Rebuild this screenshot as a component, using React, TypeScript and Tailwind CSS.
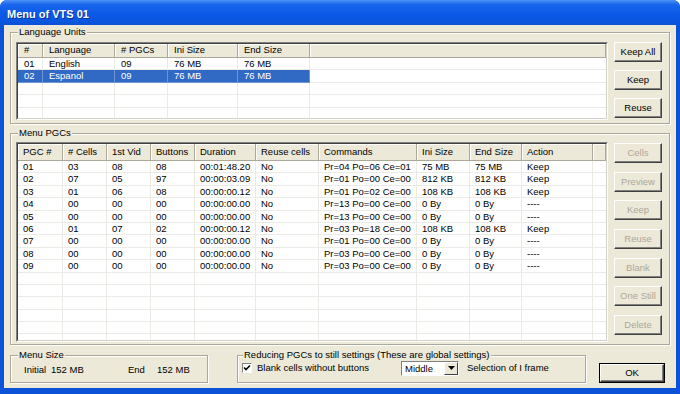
import React from 'react';

type Col = { label: string; w: string };

const langCols: Col[] = [
  { label: '#', w: 'w-[25px]' },
  { label: 'Language', w: 'w-[72px]' },
  { label: '# PGCs', w: 'w-[53px]' },
  { label: 'Ini Size', w: 'w-[70px]' },
  { label: 'End Size', w: 'w-[72px]' },
];

const langRows = [
  ['01', 'English', '09', '76 MB', '76 MB'],
  ['02', 'Espanol', '09', '76 MB', '76 MB'],
];

const pgcCols: Col[] = [
  { label: 'PGC #', w: 'w-[45px]' },
  { label: '# Cells', w: 'w-[44px]' },
  { label: '1st Vid', w: 'w-[44px]' },
  { label: 'Buttons', w: 'w-[44px]' },
  { label: 'Duration', w: 'w-[61px]' },
  { label: 'Reuse cells', w: 'w-[63px]' },
  { label: 'Commands', w: 'w-[98px]' },
  { label: 'Ini Size', w: 'w-[53px]' },
  { label: 'End Size', w: 'w-[52px]' },
  { label: 'Action', w: 'w-[71px]' },
];

const pgcRows = [
  ['01', '03', '08', '08', '00:01:48.20', 'No', 'Pr=04 Po=06 Ce=01', '75 MB', '75 MB', 'Keep'],
  ['02', '07', '05', '97', '00:00:03.09', 'No', 'Pr=01 Po=00 Ce=00', '812 KB', '812 KB', 'Keep'],
  ['03', '01', '06', '08', '00:00:00.12', 'No', 'Pr=01 Po=02 Ce=00', '108 KB', '108 KB', 'Keep'],
  ['04', '00', '00', '00', '00:00:00.00', 'No', 'Pr=13 Po=00 Ce=00', '0 By', '0 By', '----'],
  ['05', '00', '00', '00', '00:00:00.00', 'No', 'Pr=13 Po=00 Ce=00', '0 By', '0 By', '----'],
  ['06', '01', '07', '02', '00:00:00.12', 'No', 'Pr=03 Po=18 Ce=00', '108 KB', '108 KB', 'Keep'],
  ['07', '00', '00', '00', '00:00:00.00', 'No', 'Pr=01 Po=00 Ce=00', '0 By', '0 By', '----'],
  ['08', '00', '00', '00', '00:00:00.00', 'No', 'Pr=03 Po=00 Ce=00', '0 By', '0 By', '----'],
  ['09', '00', '00', '00', '00:00:00.00', 'No', 'Pr=03 Po=00 Ce=00', '0 By', '0 By', '----'],
];

interface ListViewProps {
  cols: Col[];
  rows: string[][];
  total: number;
  box: string;
  headH: string;
  pad: string;
  selected?: number;
}

const ListView: React.FC<ListViewProps> = ({ cols, rows, total, box, headH, pad, selected }) => {
  const all = Array.from({ length: total }, (_, i) => rows[i] || null);
  return (
    <div className={`${box} border border-t-[#808080] border-l-[#808080] border-r-white border-b-white`}>
      <div className="h-full border border-t-[#404040] border-l-[#404040] border-r-[#d4d0c8] border-b-[#d4d0c8] bg-white overflow-hidden">
        {/* header */}
        <div className={`flex ${headH} bg-[#ece9d8] border-b border-[#aca899]`}>
          {cols.map((c) => (
            <div
              key={c.label}
              className={`${c.w} ${pad} shrink-0 flex items-center border-r border-[#aca899] shadow-[inset_1px_1px_0_#fff] whitespace-nowrap`}
            >
              {c.label}
            </div>
          ))}
          <div className="flex-1 border-r border-[#aca899] shadow-[inset_1px_1px_0_#fff]" />
        </div>
        {/* rows */}
        {all.map((r, i) => {
          const sel = i === selected;
          return (
            <div key={i} className="flex h-[12.4px]">
              {cols.map((c, j) => (
                <div
                  key={j}
                  className={`${c.w} ${pad} shrink-0 border-r border-b leading-[11.4px] whitespace-nowrap overflow-hidden ${
                    sel ? 'bg-[#316ac5] text-white border-[#6d93d3]' : 'border-[#ebebe6]'
                  }`}
                >
                  {r ? r[j] : ''}
                </div>
              ))}
              <div className="flex-1 border-b border-[#ebebe6]" />
            </div>
          );
        })}
      </div>
    </div>
  );
};

const Button: React.FC<{ label: string; disabled?: boolean }> = ({ label, disabled }) => (
  <div
    className={`w-[48px] h-[20px] shrink-0 flex items-center justify-center bg-[#ece9d8] border border-t-white border-l-white border-r-[#404040] border-b-[#404040] shadow-[inset_-1px_-1px_0_#808080] ${
      disabled ? 'text-[#aca899]' : 'text-black'
    }`}
  >
    {label}
  </div>
);

const Group: React.FC<{ label: string; className: string; labelLeft: string; children?: React.ReactNode }> = ({
  label,
  className,
  labelLeft,
  children,
}) => (
  <div className={`relative shrink-0 border border-[#aca899] shadow-[inset_1px_1px_0_#fff,1px_1px_0_#fff] ${className}`}>
    <span className={`absolute -top-[7px] ${labelLeft} px-[1px] bg-[#ece9d8] leading-[12px] whitespace-nowrap`}>
      {label}
    </span>
    {children}
  </div>
);

export default function App() {
  return (
    <div className="w-[680px] h-[394px] flex flex-col overflow-hidden rounded-t-[7px] bg-[#0b52d8] text-[9.5px] text-black font-['Liberation_Sans',Arial,sans-serif]">
      {/* title bar */}
      <div className="h-[25px] shrink-0 flex items-center pl-[7px] pt-[3px] bg-[linear-gradient(to_bottom,#4d93f7_0%,#1a66ec_18%,#0b5ae6_55%,#0a56e0_85%,#0b50d4_100%)]">
        <span className="text-white font-bold text-[11px] [text-shadow:1px_1px_0_#0a2f9c]">Menu of VTS 01</span>
      </div>

      {/* client area */}
      <div className="flex-1 mx-[4px] mb-[6px] bg-[#ece9d8] flex flex-col px-[6px]">
        <Group label="Language Units" labelLeft="left-[7px]" className="mt-[7px] w-[660px] h-[92px]">
          <div className="flex gap-[6px] pt-[9px] pl-[5px]">
            <ListView
              cols={langCols}
              rows={langRows}
              total={5}
              box="w-[592px] h-[78px]"
              headH="h-[14px]"
              pad="pl-[6px]"
              selected={1}
            />
            <div className="flex flex-col gap-[8px]">
              <Button label="Keep All" />
              <Button label="Keep" />
              <Button label="Reuse" />
            </div>
          </div>
        </Group>

        <Group label="Menu PGCs" labelLeft="left-[7px]" className="mt-[9px] w-[660px] h-[212px]">
          <div className="flex gap-[6px] pt-[8px] pl-[5px]">
            <ListView
              cols={pgcCols}
              rows={pgcRows}
              total={15}
              box="w-[592px] h-[200px]"
              headH="h-[17px]"
              pad="pl-[5px]"
            />
            <div className="flex flex-col gap-[8.7px] pt-[1px]">
              <Button label="Cells" disabled />
              <Button label="Preview" disabled />
              <Button label="Keep" disabled />
              <Button label="Reuse" disabled />
              <Button label="Blank" disabled />
              <Button label="One Still" disabled />
              <Button label="Delete" disabled />
            </div>
          </div>
        </Group>

        <div className="flex items-start mt-[10px]">
          <Group label="Menu Size" labelLeft="left-[7px]" className="w-[198px] h-[28px]">
            <div className="flex pl-[13px] pt-[8px] leading-[12px] whitespace-nowrap">
              <span className="w-[27px]">Initial</span>
              <span className="w-[77px]">152 MB</span>
              <span className="w-[29px]">End</span>
              <span>152 MB</span>
            </div>
          </Group>

          <Group
            label="Reducing PGCs to still settings (These are global settings)"
            labelLeft="left-[5px]"
            className="ml-[29px] w-[349px] h-[28px]"
          >
            <div className="flex items-center h-[20px] mt-[2px] pl-[4px] whitespace-nowrap">
              <div className="w-[10px] h-[10px] shrink-0 bg-white border border-t-[#808080] border-l-[#808080] border-r-white border-b-white flex items-center justify-center">
                <svg width="8" height="8" viewBox="0 0 8 8">
                  <path d="M1 3.5 L3 5.5 L7 1.5" stroke="#000" strokeWidth="1.6" fill="none" />
                </svg>
              </div>
              <span className="ml-[5px] w-[144px]">Blank cells without buttons</span>
              <div className="w-[58px] h-[15px] shrink-0 flex bg-white border border-t-[#808080] border-l-[#808080] border-r-white border-b-white">
                <span className="flex-1 pl-[3px] leading-[13px]">Middle</span>
                <div className="w-[14px] h-full flex items-center justify-center bg-[#ece9d8] border border-t-white border-l-white border-r-[#404040] border-b-[#404040]">
                  <svg width="7" height="4" viewBox="0 0 7 4">
                    <path d="M0 0 H7 L3.5 4 Z" fill="#000" />
                  </svg>
                </div>
              </div>
              <span className="ml-[8px]">Selection of I frame</span>
            </div>
          </Group>

          <div className="ml-[13px] mt-[8px] w-[66px] h-[20px] border border-black">
            <div className="h-full flex items-center justify-center bg-[#ece9d8] border border-t-white border-l-white border-r-[#404040] border-b-[#404040] shadow-[inset_-1px_-1px_0_#808080]">
              OK
            </div>
          </div>
        </div>
      </div>
    </div>
  );
}
